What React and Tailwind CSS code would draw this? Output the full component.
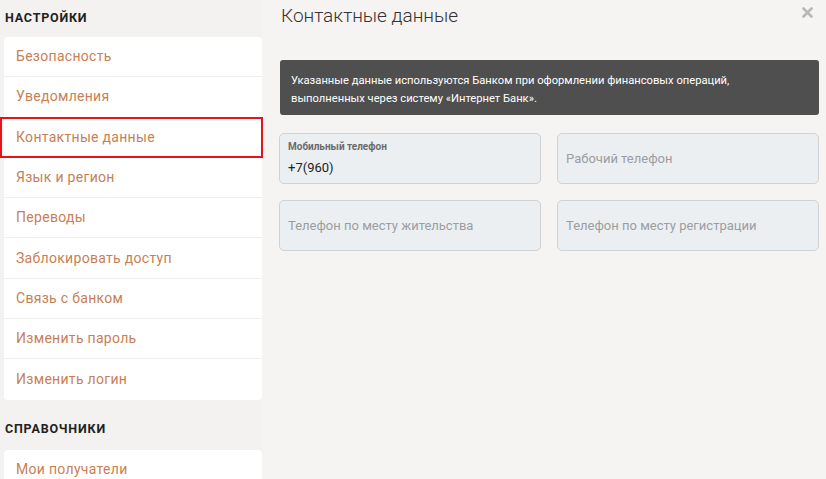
import React from "react";

const settings = [
  "Безопасность",
  "Уведомления",
  "Контактные данные",
  "Язык и регион",
  "Переводы",
  "Заблокировать доступ",
  "Связь с банком",
  "Изменить пароль",
  "Изменить логин",
];

function Item({ label, active, last }) {
  return (
    <div
      className={
        "relative h-[40.3px] flex items-center px-3 text-[14px] text-[#c87f55] tracking-[0.3px] " +
        (last ? "" : "border-b border-[#f0eeec]")
      }
    >
      {label}
      {active && (
        <span className="absolute -left-[4px] -right-[1px] -top-[1px] -bottom-[1px] border-2 border-[#e3141c]" />
      )}
    </div>
  );
}

function Field({ label, value, placeholder }) {
  return (
    <div className="h-[51px] rounded-[5px] border border-[#cfd3d6] bg-[#eceff1] px-[8px] flex flex-col justify-center">
      {label ? (
        <>
          <div className="text-[10px] font-bold text-[#6b6b6b] leading-[12px] mt-[1px]">{label}</div>
          <div className="text-[13px] text-[#222] leading-[18px] mt-[6px]">{value}</div>
        </>
      ) : (
        <div className="text-[13px] text-[#9a9ea2] leading-[18px] mt-[1px]">{placeholder}</div>
      )}
    </div>
  );
}

export default function App() {
  return (
    <div
      className="w-[826px] h-[479px] overflow-hidden bg-[#f5f4f2] flex"
      style={{ fontFamily: '"Roboto", "Noto Sans", sans-serif' }}
    >
      <aside className="w-[262px] shrink-0 bg-[#f3f2f0] pl-[4px]">
        <div className="h-[37px] flex items-center pl-[1px] text-[12.5px] font-bold tracking-[0.8px] text-[#222]">
          НАСТРОЙКИ
        </div>
        <div className="bg-white rounded-[4px]">
          {settings.map((s, i) => (
            <Item key={s} label={s} active={s === "Контактные данные"} last={i === settings.length - 1} />
          ))}
        </div>
        <div className="h-[50px] flex items-center pl-[1px] pt-[10px] text-[12.5px] font-bold tracking-[0.8px] text-[#222]">
          СПРАВОЧНИКИ
        </div>
        <div className="bg-white rounded-[4px]">
          <Item label="Мои получатели" last />
        </div>
      </aside>
      <main className="flex-1 pl-[17px] pr-[7px]">
        <div className="h-[33px] flex items-start justify-between pt-[4px]">
          <h1 className="text-[19px] font-light text-[#333] leading-[24px] pl-[2px]">Контактные данные</h1>
          <svg width="11" height="11" viewBox="0 0 11 11" className="mt-[3px] mr-[6px]">
            <path d="M1.5 1.5 L9.5 9.5 M9.5 1.5 L1.5 9.5" stroke="#b8b8b8" strokeWidth="2.6" strokeLinecap="round" />
          </svg>
        </div>
        <div className="mt-[27px] ml-[1px] h-[55px] rounded-[3px] bg-[#4f4f4f] pl-[11px] pt-[12px] text-[11.2px] leading-[18px] text-white">
          Указанные данные используются Банком при оформлении финансовых операций,
          <br />
          выполненных через систему «Интернет Банк».
        </div>
        <div className="mt-[18px] grid grid-cols-2 gap-x-[16px] gap-y-[16px]">
          <Field label="Мобильный телефон" value="+7(960)" />
          <Field placeholder="Рабочий телефон" />
          <Field placeholder="Телефон по месту жительства" />
          <Field placeholder="Телефон по месту регистрации" />
        </div>
      </main>
    </div>
  );
}
